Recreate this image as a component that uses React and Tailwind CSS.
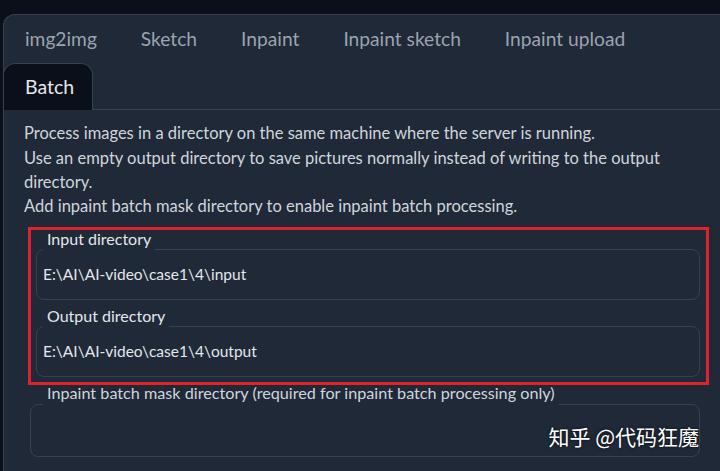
import React from 'react';

const tabs = ['img2img', 'Sketch', 'Inpaint', 'Inpaint sketch', 'Inpaint upload'];

const Field = ({ label, value, children, boxClass = '' }) => (
  <div>
    <div className="relative z-10 ml-[7px] -mb-[1px] h-[20px] w-fit bg-[#1f2937] px-[4px] text-[16px] leading-[18px] text-[#e5e7eb]">
      {label}
    </div>
    <div className={`relative flex h-[51px] items-center rounded-lg border border-[#374151] pl-[6px] text-[15.5px] text-[#e5e7eb] ${boxClass}`}>
      {value}
      {children}
    </div>
  </div>
);

const App = () => {
  return (
    <div className="h-[471px] w-[720px] overflow-hidden bg-[#0b0f19] pl-[3px] pt-[14px] font-['Lato','Liberation_Sans',sans-serif]">
      <div className="h-full rounded-tl-xl border-l border-t border-[#374151] bg-[#1f2937]">
        {/* tab strip */}
        <div className="flex h-[48px] items-center text-[19.2px] text-[#9ca3af]">
          {tabs.map(t => (
            <div key={t} className="px-[22px] first:pl-[21px]">{t}</div>
          ))}
        </div>
        <div className="-ml-px flex h-[47px] border-b border-[#374151]">
          <div className="-mb-px flex w-[90px] items-center rounded-t-xl border border-b-0 border-[#374151] bg-[#0b0f19] pl-[21px] text-[19.5px] text-[#e5e7eb]">
            Batch
          </div>
        </div>

        {/* batch panel */}
        <div className="pl-[20px] pr-[20px] pt-[11px]">
          <div className="text-[16.5px] leading-[24px] text-[#d1d5db]">
            <p className="mb-px">Process images in a directory on the same machine where the server is running.</p>
            <p>Use an empty output directory to save pictures normally instead of writing to the output<br />directory.</p>
            <p>Add inpaint batch mask directory to enable inpaint batch processing.</p>
          </div>

          <div className="ml-[4px] mr-[-9px] mt-[9px] border-[3px] border-[#e0222e] pb-[5px] pl-[5px] pr-[6px]">
            <Field label="Input directory" value="E:\AI\AI-video\case1\4\input" />
            <div className="mt-[7px]">
              <Field label="Output directory" value="E:\AI\AI-video\case1\4\output" />
            </div>
          </div>

          <div className="ml-[6px]">
            <div className="relative z-10 ml-[13px] -mb-[1px] h-[20px] w-fit bg-[#1f2937] px-[4px] text-[16.2px] leading-[16px] text-[#d1d5db]">
              Inpaint batch mask directory (required for inpaint batch processing only)
            </div>
            <div className="relative h-[53px] rounded-lg border border-[#374151]">
              <span className="absolute bottom-[4px] right-0 font-['Noto_Sans_CJK_SC',sans-serif] text-[21px] text-white [text-shadow:0_0_3px_rgba(0,0,0,0.8)]">
                知乎 @代码狂魔
              </span>
            </div>
          </div>
        </div>
      </div>
    </div>
  );
};

export default App;
